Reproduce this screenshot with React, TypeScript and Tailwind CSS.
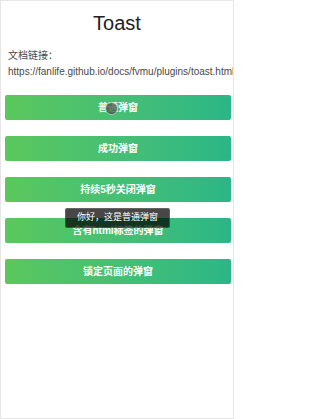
import React from "react";

const buttons = ["普通弹窗", "成功弹窗", "持续5秒关闭弹窗", "含有html标签的弹窗", "锁定页面的弹窗"];

export default function App() {
  return (
    <div
      className="relative w-[234px] h-[419px] overflow-hidden border border-[#e6e6e6] bg-white"
      style={{ fontFamily: '"Liberation Sans", "Noto Sans CJK SC", sans-serif' }}
    >
      <div className="h-[44px] flex items-center justify-center text-[20px] text-[#222]">Toast</div>
      <div className="mt-[3px] pl-[7px] text-[10px] leading-[16px] text-[#4a4a4a] whitespace-nowrap">
        <div>文档链接：</div>
        <div>https://fanlife.github.io/docs/fvmu/plugins/toast.html</div>
      </div>
      <div className="mt-[15px] flex flex-col gap-[16px]">
        {buttons.map((b, i) => (
          <div
            key={b}
            className="relative ml-[4px] w-[226px] h-[25px] rounded-[2px] bg-gradient-to-r from-[#5bc85c] to-[#2bb687] flex items-center justify-center text-white text-[10px] font-bold"
          >
            {b}
            {i === 0 && (
              <span className="absolute left-[100px] top-[7px] w-[13px] h-[13px] rounded-full bg-[rgba(70,80,75,0.75)] border border-[rgba(255,255,255,0.55)]" />
            )}
          </div>
        ))}
      </div>
      <div className="absolute left-[64px] top-[207px] w-[105px] h-[20px] rounded-[2px] bg-[rgba(0,0,0,0.72)] border border-[rgba(255,255,255,0.15)] flex items-center justify-center text-white text-[9px]">
        你好，这是普通弹窗
      </div>
    </div>
  );
}
